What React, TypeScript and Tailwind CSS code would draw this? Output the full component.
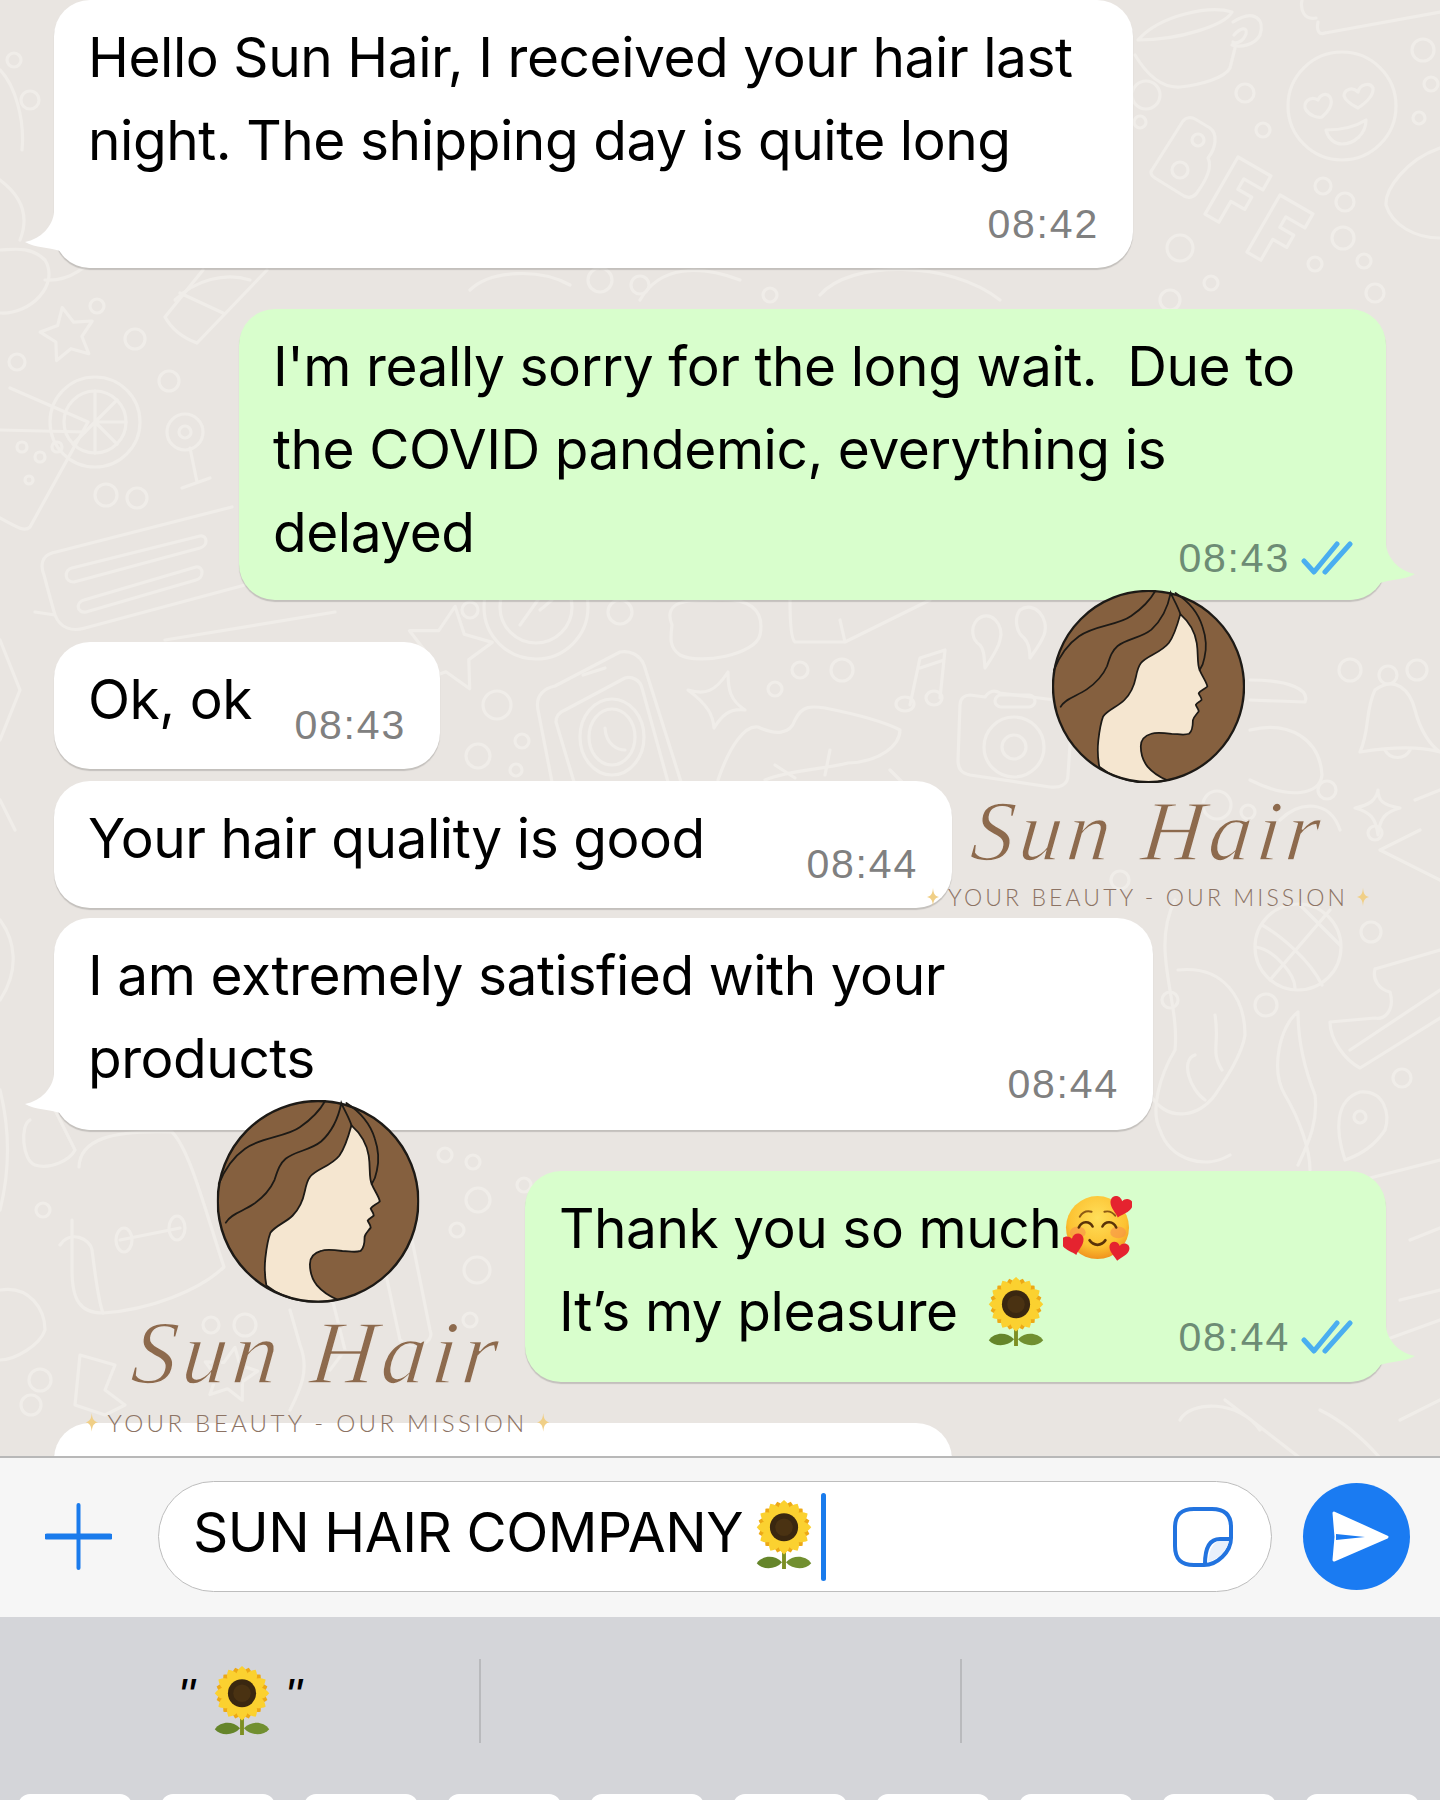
import React from "react";

function Sunflower({ className }: { className: string }) {
  const back = Array.from({ length: 12 }, (_, i) => i * 30 + 15);
  const front = Array.from({ length: 12 }, (_, i) => i * 30);
  return (
    <svg viewBox="0 0 60 72" className={className}>
      <path d="M30 48 L30 71" stroke="#7d8f22" strokeWidth="4" />
      <path d="M28 64 C20 56 8 57 2 65 C8 72 21 72 28 64 Z" fill="#65852a" />
      <path d="M32 64 C40 56 52 57 58 65 C52 72 39 72 32 64 Z" fill="#718f30" />
      {back.map((a) => (
        <path key={a} d="M30 1 C38 7 38 15 30 22 C22 15 22 7 30 1 Z" fill="#eda815" transform={`rotate(${a} 30 28)`} />
      ))}
      {front.map((a) => (
        <path key={a} d="M30 0 C38 6 38 14 30 22 C22 14 22 6 30 0 Z" fill="#fbd130" transform={`rotate(${a} 30 28)`} />
      ))}
      <circle cx="30" cy="28" r="14.5" fill="#3a2710" />
      <circle cx="30" cy="28" r="9" fill="#4a3212" />
    </svg>
  );
}

function HeartFace({ className }: { className: string }) {
  const heart = "M0 -4 C-3 -10 -12 -9 -12 -2 C-12 5 -4 9 0 14 C4 9 12 5 12 -2 C12 -9 3 -10 0 -4 Z";
  return (
    <svg viewBox="0 0 70 68" className={className}>
      <defs>
        <radialGradient id="fg" cx="50%" cy="35%" r="65%">
          <stop offset="0%" stopColor="#ffdf5a" />
          <stop offset="70%" stopColor="#fcc232" />
          <stop offset="100%" stopColor="#f0921e" />
        </radialGradient>
      </defs>
      <circle cx="35" cy="33" r="32" fill="url(#fg)" />
      <ellipse cx="15" cy="38" rx="8" ry="6" fill="#f58a4a" opacity="0.55" />
      <ellipse cx="56" cy="38" rx="8" ry="6" fill="#f58a4a" opacity="0.55" />
      <path d="M16 33 C19 26 27 26 30 32" fill="none" stroke="#5a3308" strokeWidth="2.6" strokeLinecap="round" />
      <path d="M40 32 C43 26 51 26 54 33" fill="none" stroke="#5a3308" strokeWidth="2.6" strokeLinecap="round" />
      <path d="M17 22 C20 17 25 16 29 17" fill="none" stroke="#8d5a14" strokeWidth="2" strokeLinecap="round" />
      <path d="M42 17 C46 16 50 17 53 21" fill="none" stroke="#8d5a14" strokeWidth="2" strokeLinecap="round" />
      <path d="M27 46 C31 52 39 52 43 46" fill="none" stroke="#5a3308" strokeWidth="2.8" strokeLinecap="round" />
      <path d={heart} fill="#e5232f" transform="translate(59 10) rotate(15) scale(0.95)" />
      <path d={heart} fill="#e5232f" transform="translate(10 48) rotate(-15) scale(0.95)" />
      <path d={heart} fill="#e5232f" transform="translate(57 55) rotate(10) scale(0.85)" />
    </svg>
  );
}

function Ticks() {
  return (
    <svg viewBox="0 0 52 34" className="w-[52px] h-[34px] ml-[11px]" fill="none" stroke="#4aaef0" strokeWidth="5" strokeLinecap="round" strokeLinejoin="round">
      <path d="M3 20 L13 31 L36 3" />
      <path d="M24 31 L49 3" />
    </svg>
  );
}

function Tail({ side, color }: { side: "left" | "right"; color: string }) {
  return (
    <svg
      viewBox="0 0 72 56"
      className={
        side === "left"
          ? "absolute left-[-30px] bottom-0 w-[72px] h-[56px]"
          : "absolute right-[-30px] bottom-0 w-[72px] h-[56px] -scale-x-100"
      }
    >
      <path d="M30 0 C29 14 17 27 1 30 C12 36 24 35 36 39 C44 50 56 56 72 56 L72 0 Z" fill={color} />
    </svg>
  );
}

function Bubble({
  side,
  width,
  pb,
  tail,
  children,
}: {
  side: "left" | "right";
  width: string;
  pb: string;
  tail?: boolean;
  children?: React.ReactNode;
}) {
  const green = side === "right";
  return (
    <div
      className={`relative ${width} ${pb} rounded-[36px] pt-[16px] pl-[34px] font-['Inter',sans-serif] text-[55px] tracking-[-0.45px] leading-[83px] text-black shadow-[0_2px_1px_rgba(0,0,0,0.16)] ${
        green ? "self-end mr-[54px] pr-[33px] bg-[#d8fecc]" : "ml-[54px] pr-[34px] bg-white"
      }`}
    >
      {tail && <Tail side={side} color={green ? "#d8fecc" : "#ffffff"} />}
      <div className="relative">{children}</div>
    </div>
  );
}

function Row({ left, time, green }: { left?: React.ReactNode; time: string; green?: boolean }) {
  return (
    <div className="flex items-end justify-between">
      <div className="whitespace-pre">{left}</div>
      <div className="flex items-center mb-[-5px]">
        <span
          className={`font-['Liberation_Sans',sans-serif] text-[41px] leading-[42px] tracking-[1.8px] ${
            green ? "text-[#6d8c75]" : "text-[#808080]"
          }`}
        >
          {time}
        </span>
        {green && <Ticks />}
      </div>
    </div>
  );
}

function Sparkle({ className }: { className: string }) {
  return (
    <svg viewBox="0 0 20 30" className={className}>
      <path d="M10 0 C11 10 13 13 20 15 C13 17 11 20 10 30 C9 20 7 17 0 15 C7 13 9 10 10 0 Z" fill="#f0cf86" />
    </svg>
  );
}

function Logo({ className }: { className: string }) {
  return (
    <div className={`absolute flex flex-col items-center w-[460px] ${className}`}>
      <svg viewBox="0 0 200 200" className="w-[193px] h-[193px]">
        <circle cx="100" cy="100" r="99" fill="#85603f" />
        <path
          d="M133 25 C142 33 148 42 150 55 C152 68 150 76 153 83 C156 90 160 95 161 100 C158 103 154 104 152 107 C153 110 155 111 155 114 C153 116 150 117 149 119 C150 122 152 123 152 126 C149 130 147 131 146 135 C146 140 146 146 142 149 C136 151 130 149 124 149 C116 148 108 147 103 149 C96 151 92 156 92 162 C92 171 95 178 99 183 C105 190 112 194 119 197 C108 200 98 200 89 199 C74 197 60 192 49 183 C47 172 47 165 48 156 C49 147 50 139 53 131 C58 124 68 121 75 114 C81 108 85 100 87 90 C88 85 89 80 92 76 C98 68 112 66 121 55 C127 47 130 36 133 25 Z"
          fill="#f5e6d0"
          stroke="#1d1a16"
          strokeWidth="1.8"
          strokeLinejoin="round"
        />
        <g fill="none" stroke="#1d1a16" strokeWidth="1.8" strokeLinecap="round">
          <path d="M2 83 C8 68 18 55 28 48 C45 36 68 37 82 27 C92 20 102 10 107 1" />
          <path d="M9 121 C14 112 26 110 36 103 C46 96 53 88 57 79 C60 70 62 63 68 58 C78 50 92 50 103 41 C113 32 120 18 123 3 C126 10 131 18 133 25" />
          <path d="M128 3 C142 12 152 25 156 38 C160 50 160 62 158 70 C157 76 155 80 153 83" />
        </g>
        <circle cx="100" cy="100" r="99" fill="none" stroke="#1d1a16" strokeWidth="2.4" />
      </svg>
      <div className="mt-[6px] h-[84px] font-['Liberation_Serif',serif] italic text-[86px] leading-[84px] tracking-[5px] -skew-x-6 text-[#8d6a4d] [-webkit-text-stroke:1.4px_#e9e5e1] whitespace-nowrap">
        Sun Hair
      </div>
      <div className="flex items-center mt-[11px]">
        <Sparkle className="w-[12px] h-[26px]" />
        <span className="mx-[9px] font-['Lato',sans-serif] font-light text-[23px] leading-[24px] tracking-[3.1px] text-[#8c7364] whitespace-nowrap">
          YOUR BEAUTY - OUR MISSION
        </span>
        <Sparkle className="w-[12px] h-[26px]" />
      </div>
    </div>
  );
}

function Star5({ cx, cy, r, rot = 0 }: { cx: number; cy: number; r: number; rot?: number }) {
  const pts = Array.from({ length: 10 }, (_, i) => {
    const a = ((i * 36 - 90 + rot) * Math.PI) / 180;
    const rr = i % 2 ? r * 0.5 : r;
    return `${(cx + rr * Math.cos(a)).toFixed(1)},${(cy + rr * Math.sin(a)).toFixed(1)}`;
  }).join(" ");
  return <polygon points={pts} />;
}

function Doodles() {
  const rings: [number, number, number][] = [
    [97, 306, 7], [135, 339, 10], [17, 362, 8], [169, 381, 10], [106, 495, 11], [137, 498, 10],
    [1245, 93, 9], [1263, 130, 7], [1146, 95, 14], [1140, 122, 6], [1423, 50, 11], [1431, 84, 7], [1419, 118, 6],
    [1323, 186, 8], [1345, 202, 9], [1343, 238, 11], [1315, 264, 7], [1364, 261, 7], [1375, 293, 9], [1211, 283, 7], [1180, 248, 13], [1170, 300, 10],
    [497, 705, 14], [522, 741, 7], [478, 756, 12], [516, 770, 6], [800, 670, 8], [842, 670, 11], [775, 689, 7],
    [1350, 670, 11], [1417, 670, 10], [1327, 790, 9], [1248, 812, 7], [1217, 805, 14], [1375, 833, 7],
    [1371, 932, 10], [1266, 1005, 11], [1402, 1078, 9], [1360, 1117, 6], [445, 1155, 7], [473, 1162, 7], [524, 1185, 7], [478, 1200, 12], [457, 1230, 7], [477, 1270, 13], [470, 1320, 7],
    [43, 1210, 7], [40, 1380, 11], [31, 1405, 10], [211, 1325, 8], [245, 1325, 11],
    [30, 100, 9], [14, 60, 7], [155, 225, 9], [195, 225, 7], [600, 280, 12], [640, 285, 9], [770, 295, 7], [470, 610, 8], [620, 612, 12],
    [1120, 880, 9], [1170, 1000, 8],
  ];
  return (
    <svg viewBox="0 0 1440 1458" className="absolute inset-0 w-[1440px] h-[1458px]" fill="none" stroke="#f0ede9" strokeWidth="3.2" strokeLinecap="round" strokeLinejoin="round">
      {rings.map(([x, y, r], i) => (
        <circle key={i} cx={x} cy={y} r={r} />
      ))}
      <path d="M1138 40 C1160 15 1210 5 1232 12 C1225 25 1180 40 1138 40 Z" />
      <path d="M1135 55 C1150 80 1165 88 1180 87 C1200 85 1225 78 1230 68 L1235 48" />
      <path d="M1233 22 C1255 8 1265 20 1260 35 C1255 45 1240 48 1232 45 M1234 35 C1240 28 1248 26 1246 34 C1243 42 1236 44 1233 42" />
      <circle cx="1342" cy="106" r="54" />
      <path d="M1318 100 C1310 95 1302 103 1306 110 C1310 116 1318 118 1322 117 C1328 112 1334 104 1330 97 C1326 92 1320 95 1318 100 Z" />
      <path d="M1358 92 C1352 86 1344 90 1344 96 C1346 102 1354 106 1358 108 C1364 104 1374 96 1373 88 C1370 82 1360 84 1358 92 Z" />
      <path d="M1326 130 C1340 130 1355 127 1366 120 C1366 134 1354 144 1342 144 C1334 144 1328 138 1326 130 Z" />
      <path d="M1152 170 L1183 121 C1186 117 1192 117 1195 119 L1210 128 C1218 134 1216 148 1208 158 C1212 166 1208 178 1196 194 C1192 198 1188 198 1184 196 L1155 178 C1151 176 1150 172 1152 170 Z" />
      <circle cx="1198" cy="140" r="6" />
      <circle cx="1180" cy="170" r="8" />
      <path transform="translate(1238 157) rotate(30)" d="M0 0 H38 V16 H16 V28 H32 V42 H16 V66 H0 Z" />
      <path transform="translate(1280 195) rotate(30)" d="M0 0 H38 V16 H16 V28 H32 V42 H16 V66 H0 Z" />
      <path d="M1316 18 C1304 20 1300 10 1302 0 M1325 33 L1440 12 M1318 22 C1316 32 1320 35 1325 33" />
      <path d="M1440 148 C1405 160 1385 190 1386 205 C1392 225 1415 238 1440 238" />
      <path d="M0 313 C30 315 60 285 45 260 C30 245 10 250 0 250 M45 280 C70 282 90 265 100 250" />
      <path d="M165 317 L203 270 M197 343 L267 270 M165 317 Q175 335 197 343 M180 293 L223 313" />
      <path d="M20 240 C30 215 20 195 0 180 M0 70 C15 85 25 120 22 150" />
      <Star5 cx={68} cy={335} r={28} rot={-12} />
      <circle cx="95" cy="422" r="45" />
      <circle cx="95" cy="422" r="31" />
      <path d="M95 422 L95 391 M95 422 L117 400 M95 422 L126 422 M95 422 L117 444 M95 422 L95 453 M95 422 L73 444" />
      <path d="M10 388 L88 422 L30 527 C25 532 18 528 0 518 M0 430 L85 432" />
      <circle cx="22" cy="447" r="5" />
      <circle cx="40" cy="457" r="5" />
      <circle cx="57" cy="447" r="5" />
      <circle cx="29" cy="480" r="4" />
      <circle cx="185" cy="432" r="18" />
      <circle cx="185" cy="432" r="6" />
      <path d="M190 448 L197 482 M182 488 L210 478" />
      <path d="M52 553 L232 507 M52 553 C42 556 40 565 44 575 C48 590 52 605 55 615 L35 612 M55 615 C60 628 72 632 85 628 L245 585" />
      <path d="M72 568 L200 536 C208 535 208 546 200 548 L74 582 C64 582 64 570 72 568 Z" />
      <path d="M84 600 L196 567 C204 566 204 578 196 580 L86 612 C76 613 76 602 84 600 Z" />
      <path d="M165 640 L335 612" />
      <path d="M175 300 C195 280 225 272 250 280" />
      <path d="M470 290 C490 270 540 268 570 285 M640 300 C660 265 700 265 740 280 M820 295 C850 260 950 260 1000 300" />
      <Star5 cx={449} cy={650} r={44} rot={8} />
      <circle cx="536" cy="607" r="52" />
      <circle cx="536" cy="607" r="36" />
      <path d="M520 625 L545 590 M540 610 L552 600" />
      <path d="M672 625 C662 600 690 600 710 600 C750 596 765 610 760 635 C755 655 700 665 680 655 C670 648 670 640 672 625 Z" />
      <path d="M790 600 C790 630 792 640 795 642 L845 642 L930 600 M845 642 L840 620" />
      <path d="M977 620 C990 608 1005 625 1000 640 C998 650 990 660 985 668 C984 655 984 650 980 645 C972 640 970 628 977 620 Z" />
      <path d="M1020 610 C1034 600 1050 618 1044 635 C1040 645 1034 652 1030 658 C1030 648 1028 642 1024 638 C1016 632 1014 618 1020 610 Z" />
      <path d="M538 710 C535 695 545 688 555 686 L620 652 C630 650 640 655 644 665 L681 782 M552 782 L538 710" />
      <path d="M556 722 C556 715 560 712 565 710 L625 678 C632 676 640 680 642 688 L668 782 M574 782 L556 722" />
      <path d="M583 675 L605 668" />
      <ellipse cx="612" cy="737" rx="32" ry="38" />
      <ellipse cx="612" cy="737" rx="23" ry="28" />
      <path d="M605 728 C606 745 618 750 625 750" />
      <path d="M728 672 C728 690 730 700 745 710 C730 708 722 715 714 728 C713 715 708 705 688 690 C705 695 715 692 728 672 Z" />
      <path d="M718 780 C730 745 745 725 758 727 C775 735 790 735 795 720 C802 705 812 706 825 708 C860 715 885 722 900 730 C900 745 880 762 848 763 C820 770 790 770 765 780 M775 765 L795 778 M830 750 L825 775 M890 770 L905 785" />
      <path d="M910 705 L920 658 L945 650 L940 698 M920 668 L944 660" />
      <ellipse cx="905" cy="704" rx="9" ry="7" />
      <ellipse cx="934" cy="698" rx="8" ry="7" />
      <path d="M970 695 L985 697 C990 690 995 690 1000 693 L1055 700 C1065 702 1072 705 1072 715 L1068 775 C1068 785 1060 788 1050 787 L970 775 C962 773 958 770 958 760 L960 705 C960 698 965 695 970 695 Z" />
      <rect x="995" y="695" width="40" height="12" rx="6" />
      <circle cx="1014" cy="747" r="30" />
      <circle cx="1014" cy="747" r="12" />
      <path d="M1250 680 C1290 680 1310 690 1305 702 L1250 700 M1250 730 C1290 720 1320 740 1322 775 C1320 795 1290 800 1250 780" />
      <path d="M1170 660 C1190 640 1200 630 1215 640 C1230 650 1210 680 1200 690" />
      <circle cx="1388" cy="675" r="9" />
      <path d="M1375 690 C1395 675 1410 690 1415 710 C1420 730 1430 745 1440 752 M1375 690 C1365 710 1370 730 1360 752 C1385 748 1415 745 1440 752 M1385 750 C1390 760 1405 760 1410 750" />
      <path d="M1378 790 C1378 800 1382 805 1400 808 C1385 812 1380 818 1378 835 C1376 818 1370 812 1355 808 C1370 805 1376 800 1378 790 Z" />
      <path d="M1280 820 C1300 800 1330 800 1340 830 M1420 830 L1380 850 L1440 880 M1440 790 L1415 800" />
      <circle cx="1298" cy="947" r="43" />
      <path d="M1256 947 C1275 950 1295 975 1295 988 M1270 980 L1330 910 M1262 925 C1280 935 1310 960 1322 985 M1300 905 C1315 920 1330 935 1340 945" />
      <path d="M1178 970 C1225 965 1245 1000 1245 1035 C1242 1055 1225 1080 1215 1095 C1200 1115 1170 1125 1150 1095 M1215 1015 C1220 1045 1210 1050 1222 1070 M1195 1055 C1180 1060 1190 1090 1205 1100" />
      <path d="M1298 1012 C1280 1025 1270 1070 1285 1095 C1300 1120 1310 1150 1310 1170 M1298 1012 C1298 1040 1305 1070 1315 1095 C1318 1120 1310 1140 1298 1165" />
      <path d="M1175 900 C1150 950 1180 1000 1175 1050 C1160 1075 1150 1110 1160 1130 C1170 1160 1205 1170 1230 1155" />
      <path d="M1375 969 L1440 950 M1375 969 C1372 980 1380 990 1390 992 C1395 1010 1385 1020 1375 1018 L1330 1022 C1330 1040 1345 1060 1360 1068 L1440 1018 M1350 1050 L1440 990" />
      <path d="M1345 1160 C1335 1130 1335 1100 1360 1092 C1385 1090 1390 1115 1385 1130 C1375 1145 1360 1155 1345 1160 Z" />
      <path d="M1370 1178 L1440 1160" />
      <path d="M1385 1340 L1440 1320 M1400 1420 L1440 1400 M1410 1240 L1440 1228 M1400 1300 L1440 1290" />
      <path d="M1180 1420 C1190 1400 1240 1400 1260 1430 M1300 1458 L1225 1400 M1320 1410 C1340 1420 1360 1435 1380 1458" />
      <path d="M79 1167 C80 1140 110 1130 172 1132 C190 1150 205 1210 224 1267 C200 1290 150 1310 103 1313 C80 1313 72 1300 72 1270 L72 1220" />
      <path d="M60 1245 C70 1230 90 1238 92 1250 C96 1280 98 1300 103 1313" />
      <path d="M120 1240 L180 1228" />
      <ellipse cx="124" cy="1240" rx="8" ry="12" />
      <ellipse cx="177" cy="1228" rx="8" ry="12" />
      <path d="M30 1120 C20 1125 22 1160 35 1165 C50 1170 70 1160 75 1150 L55 1110" />
      <path d="M0 1290 C30 1285 45 1310 45 1330 C40 1345 15 1360 0 1360" />
      <path d="M80 1355 L115 1365 L105 1390 L125 1405 L105 1415 L75 1405 Z" />
      <Star5 cx={230} cy={1375} r={28} rot={10} />
      <path d="M290 1310 L300 1345 C310 1370 300 1390 290 1410 M300 1260 L320 1250 L345 1350 L330 1370" />
      <path d="M410 1230 L430 1330 C436 1345 410 1350 400 1340 L385 1270" />
      <path d="M0 1090 C10 1130 10 1170 0 1210" />
      <path d="M0 640 L20 690 L0 740 M0 800 L15 830" />
      <path d="M0 920 C15 940 20 970 0 1000" />
    </svg>
  );
}

export default function App() {
  return (
    <div className="w-[1440px] h-[1800px] overflow-hidden flex flex-col bg-[#d4d5d9]">
      <div className="relative h-[1456px] shrink-0 overflow-hidden bg-[#e9e5e1]">
        <Doodles />
        <div className="relative flex flex-col">
          <Bubble side="left" width="w-[1079px]" pb="pb-[28px]" tail>
            <div>Hello Sun Hair, I received your hair last</div>
            <div>night. The shipping day is quite long</div>
            <div className="mt-[21px]">
              <Row time="08:42" />
            </div>
          </Bubble>
          <div className="h-[41px]" />
          <Bubble side="right" width="w-[1147px]" pb="pb-[26px]" tail>
            <div className="whitespace-pre">I'm really sorry for the long wait.  Due to</div>
            <div>the COVID pandemic, everything is</div>
            <Row left="delayed" time="08:43" green />
          </Bubble>
          <div className="h-[42px]" />
          <Bubble side="left" width="w-[386px]" pb="pb-[28px]">
            <Row left="Ok, ok" time="08:43" />
          </Bubble>
          <div className="h-[12px]" />
          <Bubble side="left" width="w-[898px]" pb="pb-[28px]">
            <Row left="Your hair quality is good" time="08:44" />
          </Bubble>
          <div className="h-[10px]" />
          <Bubble side="left" width="w-[1099px]" pb="pb-[30px]" tail>
            <div>I am extremely satisfied with your</div>
            <Row left="products" time="08:44" />
          </Bubble>
          <div className="h-[41px]" />
          <Bubble side="right" width="w-[861px]" pb="pb-[29px]" tail>
            <div className="flex items-center">
              Thank you so much
              <HeartFace className="w-[69px] h-[67px] ml-[2px]" />
            </div>
            <Row
              left={
                <span className="flex items-center">
                  It’s my pleasure
                  <Sunflower className="w-[60px] h-[70px] ml-[28px]" />
                </span>
              }
              time="08:44"
              green
            />
          </Bubble>
          <div className="h-[41px]" />
          <Bubble side="left" width="w-[898px]" pb="pb-[28px]">
            <div className="h-[83px]" />
          </Bubble>
        </div>
        <Logo className="left-[918px] top-[590px]" />
        <Logo className="left-[76px] top-[1100px] scale-[1.05] origin-top-left" />
      </div>

      <div className="h-[161px] shrink-0 flex items-center pl-[45px] pb-[2px] bg-[#f6f6f6] border-t-[2px] border-t-[#b8b8b8]">
        <svg viewBox="0 0 67 67" className="w-[67px] h-[67px] shrink-0" stroke="#1a7bec" strokeLinecap="round">
          <path d="M33.5 2 V65" strokeWidth="4" />
          <path d="M2 33.5 H65" strokeWidth="6" />
        </svg>
        <div className="ml-[46px] w-[1114px] h-[111px] shrink-0 rounded-full bg-white border-[1.5px] border-[#bdbdbd] flex items-center pl-[34px] pr-[38px]">
          <span className="mb-[8px] font-['Inter',sans-serif] text-[55px] tracking-[-0.45px] leading-[83px] text-black whitespace-nowrap">SUN HAIR COMPANY</span>
          <Sunflower className="w-[60px] h-[70px] ml-[11px] mb-[4px]" />
          <div className="w-[5px] h-[88px] ml-[7px] rounded-full bg-[#1a7bec]" />
          <svg viewBox="0 0 60 60" className="w-[60px] h-[60px] ml-auto" fill="none" stroke="#2273df" strokeWidth="4">
            <path d="M21 2 H39 C52 2 58 8 58 20 V31 C58 45 44 58 31 58 H21 C8 58 2 52 2 39 V21 C2 8 8 2 21 2 Z" />
            <path d="M35 55 C36 43 40 35 47 34 H56 C53 45 45 52 35 55 Z" fill="#e8f0fb" stroke="none" />
            <path d="M58 32 H47 C37 32 32 40 32 57" />
          </svg>
        </div>
        <div className="ml-[31px] w-[107px] h-[107px] shrink-0 rounded-full bg-[#1a7bf2]">
          <svg viewBox="0 0 107 107" className="w-[107px] h-[107px]">
            <path d="M31 30 L84 54 L31 77 L33 54 Z" fill="#ffffff" stroke="#ffffff" strokeWidth="3" strokeLinejoin="round" />
            <path d="M33 51 L62 54 L33 57 Z" fill="#1a7bf2" />
          </svg>
        </div>
      </div>

      <div className="h-[183px] shrink-0 flex flex-col overflow-hidden">
        <div className="h-[177px] shrink-0 flex items-center pb-[10px]">
          <div className="w-[479px] h-[84px] flex items-center justify-center">
            <span className="font-['Liberation_Sans',sans-serif] italic text-[48px] leading-none text-black mb-[10px]">"</span>
            <Sunflower className="w-[60px] h-[70px] ml-[17px] mr-[13px]" />
            <span className="font-['Liberation_Sans',sans-serif] italic text-[48px] leading-none text-black mb-[10px]">"</span>
          </div>
          <div className="w-[2px] h-[84px] bg-[#b9babd]" />
          <div className="w-[479px] h-[84px]" />
          <div className="w-[2px] h-[84px] bg-[#b9babd]" />
        </div>
        <div className="flex pl-[18px] gap-[29px]">
          {Array.from({ length: 10 }, (_, i) => (
            <div key={i} className="w-[114px] h-[12px] rounded-t-[12px] bg-white" />
          ))}
        </div>
      </div>
    </div>
  );
}
